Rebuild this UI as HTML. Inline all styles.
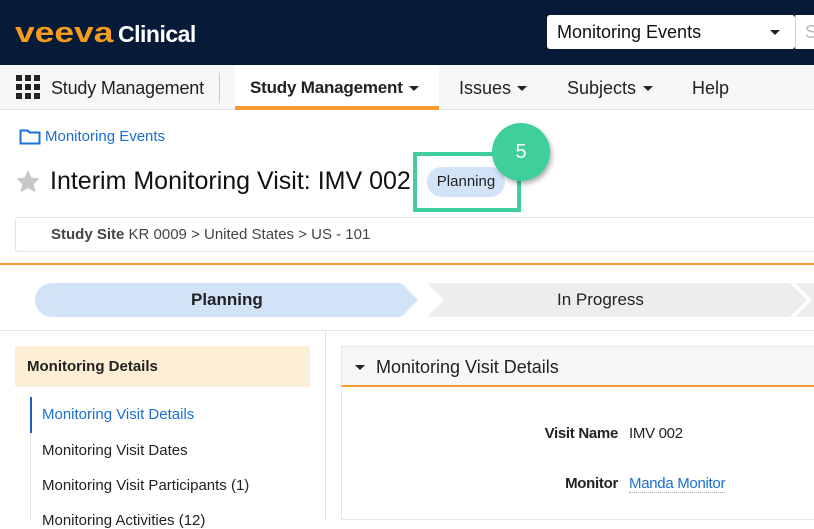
<!DOCTYPE html>
<html><head><meta charset="utf-8"><style>
*{margin:0;padding:0;box-sizing:border-box}
body{width:814px;height:520px;overflow:hidden;position:relative;font-family:"Liberation Sans",Arial,sans-serif;background:#fff;color:#222}
.a{position:absolute;white-space:nowrap}
.t{position:absolute;width:0;height:0;border-left:5px solid transparent;border-right:5px solid transparent;border-top:5px solid #222}
</style></head><body>
<div class="a" style="left:0;top:0;width:814px;height:65px;background:#071a38"></div>
<div class="a" style="left:15px;top:16px;font-size:29px;font-weight:bold;color:#f59b1f;line-height:34px;transform:scaleX(1.22);transform-origin:left">veeva</div>
<div class="a" style="left:118px;top:20px;font-size:23px;color:#fff;font-weight:bold;line-height:28px;letter-spacing:-0.5px">Clinical</div>
<div class="a" style="left:547px;top:15px;width:248px;height:34px;background:#fff;border-radius:3px"></div>
<div class="a" style="left:557px;top:22px;font-size:18px;color:#111">Monitoring Events</div>
<div class="t" style="left:770px;top:30px"></div>
<div class="a" style="left:795px;top:15px;width:19px;height:34px;background:#fff;border-left:1px solid #ccc"></div>
<div class="a" style="left:805px;top:22px;font-size:18px;color:#bbb">S</div>

<div class="a" style="left:0;top:65px;width:814px;height:45px;background:#f7f7f7;border-bottom:1px solid #e2e2e2"></div>
<svg class="a" style="left:16px;top:75px" width="26" height="26"><g fill="#222"><rect x="0" y="0" width="6" height="6"/><rect x="9" y="0" width="6" height="6"/><rect x="18" y="0" width="6" height="6"/><rect x="0" y="9" width="6" height="6"/><rect x="9" y="9" width="6" height="6"/><rect x="18" y="9" width="6" height="6"/><rect x="0" y="18" width="6" height="6"/><rect x="9" y="18" width="6" height="6"/><rect x="18" y="18" width="6" height="6"/></g></svg>
<div class="a" style="left:51px;top:78px;font-size:18px;color:#222;letter-spacing:-0.2px">Study Management</div>
<div class="a" style="left:219px;top:73px;width:1px;height:30px;background:#ccc"></div>
<div class="a" style="left:235px;top:65px;width:204px;height:45px;background:#fff;border-bottom:4px solid #f59b30"></div>
<div class="a" style="left:250px;top:78px;font-size:17px;font-weight:bold;color:#222;letter-spacing:-0.2px">Study Management</div>
<div class="t" style="left:409px;top:86px"></div>
<div class="a" style="left:459px;top:78px;font-size:18px">Issues</div>
<div class="t" style="left:517px;top:86px"></div>
<div class="a" style="left:567px;top:78px;font-size:18px">Subjects</div>
<div class="t" style="left:643px;top:86px"></div>
<div class="a" style="left:692px;top:78px;font-size:18px">Help</div>

<svg class="a" style="left:19px;top:128px" width="22" height="17"><path d="M1.5 2.5h7l2 2h10v11h-19z" fill="none" stroke="#1a73d9" stroke-width="2"/></svg>
<div class="a" style="left:45px;top:128px;font-size:15px;color:#1a6fd0">Monitoring Events</div>
<svg class="a" style="left:15px;top:169px" width="26" height="25"><path d="M13 1l3.5 7.6 8.3.9-6.2 5.6 1.8 8.2L13 19.1 5.6 23.3l1.8-8.2L1.2 9.5l8.3-.9z" fill="#c8c8c8"/></svg>
<div class="a" style="left:50px;top:167px;font-size:25px;color:#111">Interim Monitoring Visit: IMV 002</div>
<div class="a" style="left:427px;top:167px;width:78px;height:30px;background:#d2e3f8;border-radius:15px;font-size:15px;line-height:30px;text-align:center;color:#222">Planning</div>
<div class="a" style="left:413px;top:152px;width:108px;height:60px;border:4px solid #3ecf9b"></div>
<div class="a" style="left:492px;top:123px;width:58px;height:58px;border-radius:50%;background:#3ecf9b;box-shadow:2px 3px 5px rgba(0,0,0,.3);color:#fff;font-size:20px;line-height:58px;text-align:center">5</div>

<div class="a" style="left:15px;top:217px;width:810px;height:35px;border:1px solid #e2e2e2;border-radius:3px"></div>
<div class="a" style="left:51px;top:226px;font-size:15px;color:#444"><b>Study Site</b> KR 0009 &gt; United States &gt; US - 101</div>
<div class="a" style="left:0;top:263px;width:814px;height:2px;background:#f59b30"></div>

<svg class="a" style="left:35px;top:283px" width="779" height="34">
<path d="M392 0H755L772 17L755 34H392L409 17Z" fill="#ededed"/>
<path d="M760 0H779V34H760L777 17Z" fill="#ededed"/>
<path d="M17 0H366L383 17L366 34H17A17 17 0 0 1 17 0Z" fill="#d2e3f8"/>
</svg>
<div class="a" style="left:191px;top:290px;font-size:17px;font-weight:bold;color:#222">Planning</div>
<div class="a" style="left:557px;top:290px;font-size:17px;color:#222">In Progress</div>
<div class="a" style="left:0;top:330px;width:814px;height:1px;background:#e6e6e6"></div>
<div class="a" style="left:325px;top:331px;width:1px;height:189px;background:#e6e6e6"></div>

<div class="a" style="left:15px;top:346px;width:295px;height:41px;background:#fdeed6;border-radius:2px"></div>
<div class="a" style="left:27px;top:358px;font-size:15px;font-weight:bold;color:#222">Monitoring Details</div>
<div class="a" style="left:30px;top:397px;width:1px;height:123px;background:#e6e6e6"></div>
<div class="a" style="left:30px;top:397px;width:2px;height:36px;background:#1a5fc8"></div>
<div class="a" style="left:42px;top:406px;font-size:15px;color:#1a6fd0">Monitoring Visit Details</div>
<div class="a" style="left:42px;top:442px;font-size:15px">Monitoring Visit Dates</div>
<div class="a" style="left:42px;top:477px;font-size:15px">Monitoring Visit Participants (1)</div>
<div class="a" style="left:42px;top:512px;font-size:15px">Monitoring Activities (12)</div>

<div class="a" style="left:341px;top:346px;width:480px;height:174px;border:1px solid #e6e6e6"></div>
<div class="a" style="left:341px;top:346px;width:480px;height:41px;background:#f7f7f7;border:1px solid #e6e6e6;border-bottom:2px solid #f59b30"></div>
<div class="t" style="left:355px;top:365px"></div>
<div class="a" style="left:376px;top:357px;font-size:18px;color:#222">Monitoring Visit Details</div>
<div class="a" style="left:418px;width:200px;text-align:right;top:425px;font-size:15px;font-weight:bold;letter-spacing:-0.3px">Visit Name</div>
<div class="a" style="left:629px;top:425px;font-size:15px;letter-spacing:-0.3px">IMV 002</div>
<div class="a" style="left:418px;width:200px;text-align:right;top:475px;font-size:15px;font-weight:bold;letter-spacing:-0.3px">Monitor</div>
<div class="a" style="left:629px;top:475px;font-size:15px;color:#1a6fd0;border-bottom:1px dotted #aaa;letter-spacing:-0.3px">Manda Monitor</div>
</body></html>
